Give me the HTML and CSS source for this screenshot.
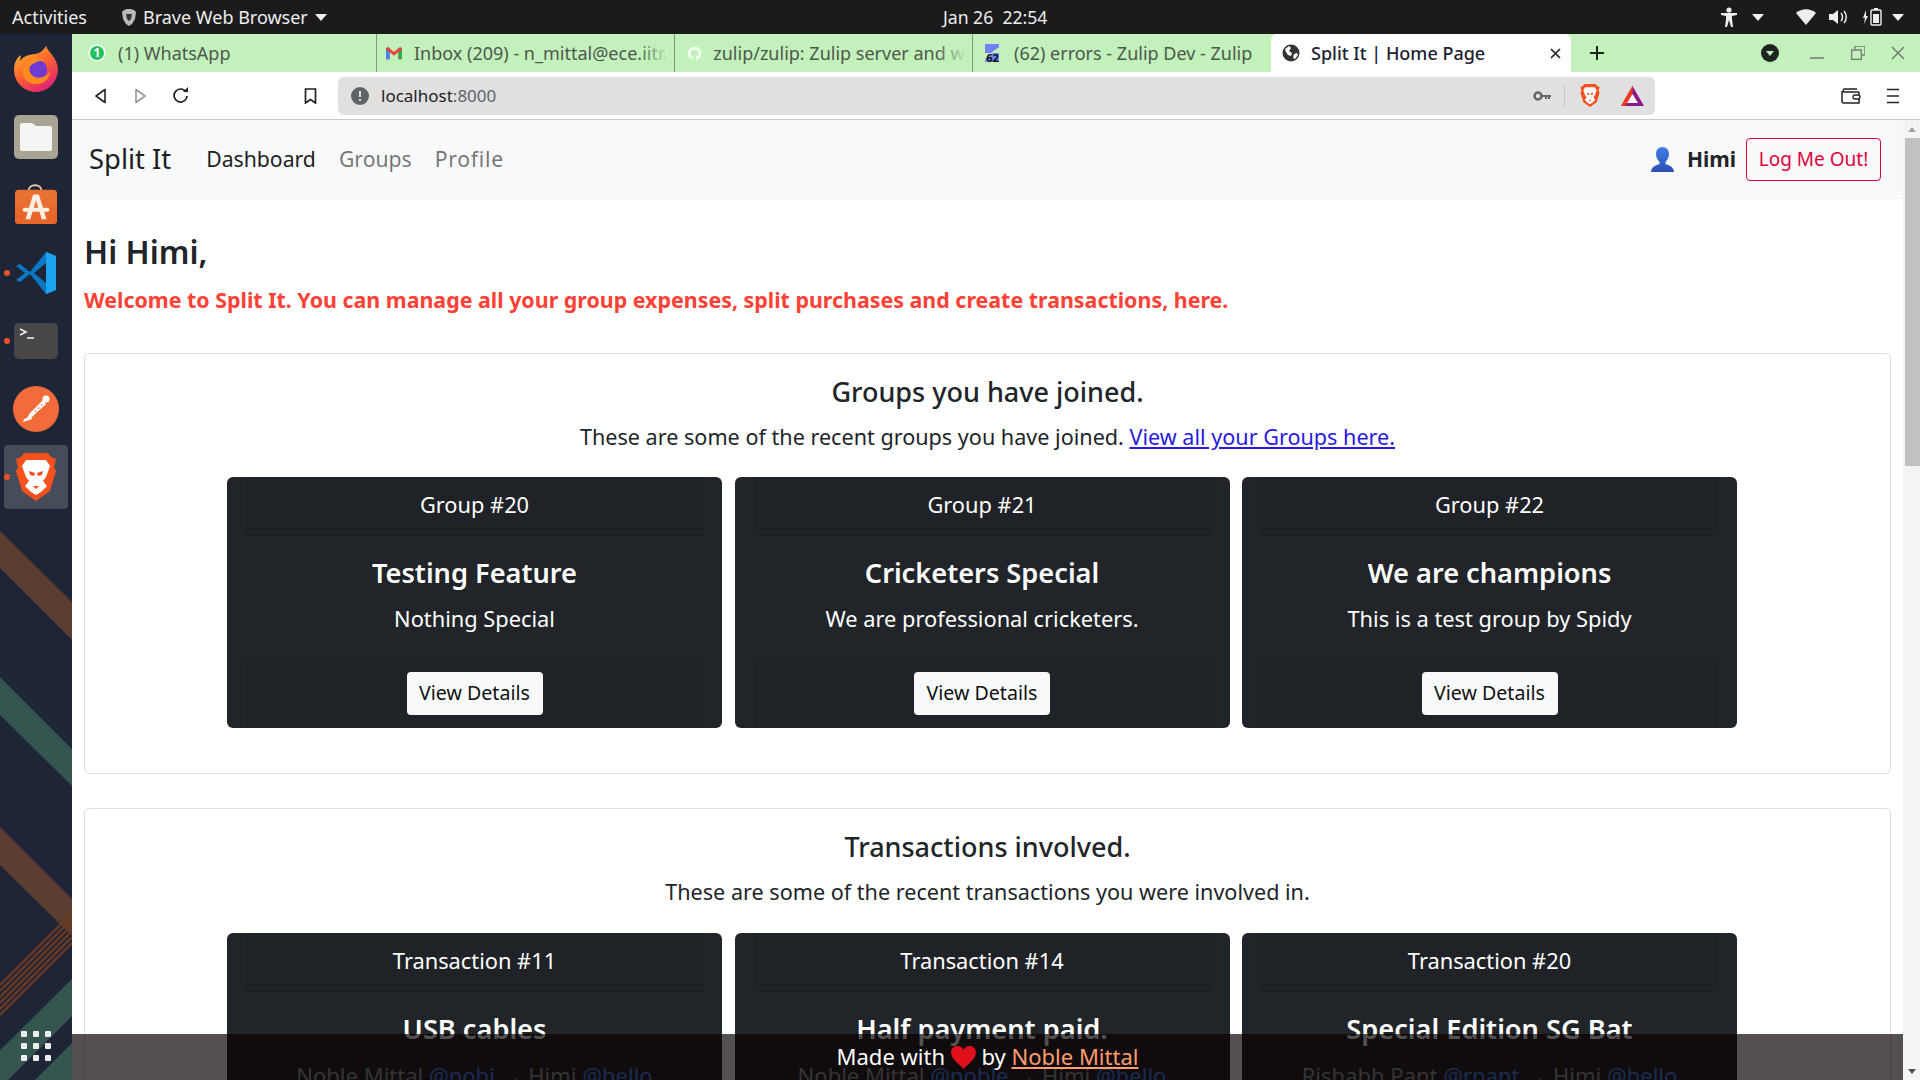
FILE: index.html
```html
<!DOCTYPE html>
<html lang="en">
<head>
    <meta charset="UTF-8">
    <title>Split It | Home Page</title>
    <link rel="stylesheet" href="styles.css">
</head>
<body>
<div class="topbar">
    <div class="top-left">
        <span class="activities">Activities</span>
        <svg class="shield" width="14" height="17" viewBox="0 0 14 17"><path d="M2 1l3-1h4l3 1 2 2-1 7-3 5-3 2-3-2-3-5L0 3z" fill="#b9b9b9"/><path d="M4 5h6l-1 5-2 2-2-2z" fill="#333"/></svg>
        <span>Brave Web Browser</span>
        <i class="caret"></i>
    </div>
    <div class="clock">Jan 26&nbsp; 22:54</div>
    <div class="top-right">
        <svg class="tray-a11y" width="16" height="20" viewBox="0 0 16 20"><circle cx="8" cy="3" r="2.6" fill="#eee"/><path d="M0 6h16v2l-5 1v3l1 8h-2l-2-7-2 7H4l1-8V9L0 8z" fill="#eee"/></svg>
        <i class="caret tray-caret"></i>
        <svg class="tray-wifi" width="20" height="16" viewBox="0 0 20 16"><path d="M10 16L0 4c6-5 14-5 20 0z" fill="#eee"/></svg>
        <svg class="tray-vol" width="19" height="16" viewBox="0 0 19 16"><path d="M0 5h4l5-4v14l-5-4H0z" fill="#eee"/><path d="M12 4c2 2 2 6 0 8M15 2c3 3 3 9 0 12" fill="none" stroke="#eee" stroke-width="1.5"/></svg>
        <svg class="tray-bat" width="19" height="18" viewBox="0 0 19 18"><path d="M3 2L0 10h2l-1 6 4-8H3z" fill="#eee"/><rect x="8" y="2" width="10" height="15" rx="1" fill="none" stroke="#eee" stroke-width="1.4"/><rect x="11" y="0" width="4" height="2" fill="#eee"/><rect x="10" y="6" width="6" height="9" fill="#eee"/></svg>
        <i class="caret"></i>
    </div>
</div>

<div class="desktop">
    <aside class="dock">
        <svg class="dock-art" width="72" height="1046" viewBox="0 34 72 1046">
            <path d="M0 531L72 602V640L0 568zM0 827L72 899V936L0 865z" fill="#5a3d2e"/>
            <path d="M0 677L72 749V786L0 715zM72 979V1016L8 1080H-30zM72 1043V1080H35z" fill="#35554f"/>
            <g stroke="#6b3a22" stroke-width="2.4"><path d="M72 913L0 985M72 919L0 991M72 925L0 997M72 931L0 1003M72 937L0 1009M72 943L0 1015"/></g>
        </svg>
        <div class="dock-item">
            <svg width="46" height="46" viewBox="0 0 46 46"><defs><linearGradient id="ff1" x1="0" y1="0" x2="0.6" y2="1"><stop offset="0" stop-color="#ffcc33"/><stop offset=".5" stop-color="#ff6b2c"/><stop offset="1" stop-color="#e3246e"/></linearGradient></defs><path d="M33 0c2 6 11 11 12 23 0 13-10 23-22 23S1 36 1 24c0-6 2-12 7-15l-1 6c2-3 5-5 9-6 5-1 11-1 14-5z" fill="url(#ff1)"/><circle cx="23" cy="24" r="11" fill="#6d3bd1"/><path d="M13 17c5-6 14-6 19-1-4-2-8-1-10 1-4 1-7 4-5 9 2 5 8 7 13 5 4-1 6-4 7-6 0 8-7 14-15 13C10 37 6 26 13 17z" fill="#ff8a1f"/></svg>
        </div>
        <div class="dock-item">
            <div class="tile tile-files"><svg width="32" height="28" viewBox="0 0 32 28"><path d="M2 0h10l4 3h14a2 2 0 0 1 2 2v21a2 2 0 0 1-2 2H2a2 2 0 0 1-2-2V2a2 2 0 0 1 2-2z" fill="#f6f5f3"/></svg></div>
        </div>
        <div class="dock-item">
            <svg width="44" height="42" viewBox="0 0 46 44"><path d="M15 8c0-9 14-9 14 0" fill="none" stroke="#e8c9a8" stroke-width="2"/><rect x="1" y="6" width="44" height="36" rx="4" fill="#ea6f33"/><path d="M1 24h44v14a4 4 0 0 1-4 4H5a4 4 0 0 1-4-4z" fill="#e8662a"/><path d="M20 11h6l8 26h-5l-6-20-6 20h-5z" fill="#fbeee3"/><rect x="9" y="25" width="28" height="4" rx="2" fill="#fbeee3"/></svg>
        </div>
        <div class="dock-item">
            <i class="run-dot"></i>
            <svg width="42" height="42" viewBox="0 0 42 42"><path d="M1 14l4-2 10 8L31 0l10 4v34l-10 4-16-20L5 30l-4-2 9-7z" fill="#0a78c2"/><path d="M31 0l10 4v34l-10 4z" fill="#1ea3f0"/><path d="M31 11L19 21l12 10z" fill="#1d2537"/></svg>
        </div>
        <div class="dock-item">
            <i class="run-dot"></i>
            <div class="tile tile-term"><svg width="44" height="36" viewBox="0 0 44 36"><path d="M6 6l6 3-6 3" fill="none" stroke="#eee" stroke-width="1.6"/><path d="M13 15h7" stroke="#eee" stroke-width="1.6"/></svg></div>
        </div>
        <div class="dock-item">
            <svg width="46" height="46" viewBox="0 0 46 46"><circle cx="23" cy="23" r="23" fill="#f26b3a"/><circle cx="33" cy="13" r="3.5" fill="#fff"/><path d="M30 14l3 4-14 13-2-4zM18 28l1 5-9 3 1-3 3-1 3-5z" fill="#fff"/><path d="M22 24l1 2M25 21l1 2M28 18l1 2" stroke="#f26b3a" stroke-width="1"/></svg>
        </div>
        <div class="dock-item">
            <i class="run-dot"></i>
            <div class="tile-active"><svg width="40" height="48" viewBox="0 0 40 48"><path d="M8 0h24l3 4 5 2-2 8 2 4-6 20-14 10L6 38 0 18l2-4-2-8 5-2z" fill="#f4511e"/><path d="M10 7h20l4 6-4 11-3 4 4 5-6 6-5 3-5-3-6-6 4-5-3-4-4-11z" fill="#fff"/><path d="M13 18l6 2-1 3-4-1zM27 18l-6 2 1 3 4-1zM17 33h6l-3 3z" fill="#f4511e"/></svg></div>
        </div>
        <div class="app-grid">
            <i></i><i></i><i></i><i></i><i></i><i></i><i></i><i></i><i></i>
        </div>
    </aside>

    <div class="browser">
        <div class="tabstrip">
            <div class="tab">
                <svg width="18" height="18" viewBox="0 0 18 18"><circle cx="9" cy="9" r="8.5" fill="#fff"/><circle cx="9" cy="9" r="7" fill="#25c15f"/><text x="9" y="13" class="fav-num">1</text></svg>
                <span>(1) WhatsApp</span>
            </div>
            <div class="tab tab-fade">
                <svg width="18" height="14" viewBox="0 0 18 14"><path d="M0 2v12h4V6l5 4 5-4v8h4V2l-2-2-7 6-7-6z" fill="#ea4335"/><path d="M0 14h4V6L0 3z" fill="#4285f4"/><path d="M14 14h4V3l-4 3z" fill="#34a853"/></svg>
                <span>Inbox (209) - n_mittal@ece.iitr.ac.in</span>
            </div>
            <div class="tab tab-fade tab-git">
                <svg width="19" height="19" viewBox="0 0 16 16"><path d="M8 0C3.58 0 0 3.58 0 8c0 3.54 2.29 6.53 5.47 7.59.4.07.55-.17.55-.38 0-.19-.01-.82-.01-1.49-2.01.37-2.53-.49-2.69-.94-.09-.23-.48-.94-.82-1.13-.28-.15-.68-.52-.01-.53.63-.01 1.08.58 1.23.82.72 1.21 1.87.87 2.33.66.07-.52.28-.87.51-1.07-1.78-.2-3.64-.89-3.64-3.95 0-.87.31-1.59.82-2.15-.08-.2-.36-1.02.08-2.12 0 0 .67-.21 2.2.82.64-.18 1.32-.27 2-.27.68 0 1.36.09 2 .27 1.53-1.04 2.2-.82 2.2-.82.44 1.1.16 1.92.08 2.12.51.56.82 1.27.82 2.15 0 3.07-1.87 3.75-3.65 3.95.29.25.54.73.54 1.48 0 1.07-.01 1.93-.01 2.2 0 .21.15.46.55.38A8.013 8.013 0 0016 8c0-4.42-3.58-8-8-8z" fill="#fff"/></svg>
                <span>zulip/zulip: Zulip server and web application</span>
            </div>
            <div class="tab">
                <svg width="20" height="20" viewBox="0 0 20 20"><path d="M3 1h14v3l-8 6h8v9H3v-3l8-6H3z" fill="#6f83f5"/><text x="10.500" y="18.500" class="fav-badge">62</text></svg>
                <span>(62) errors - Zulip Dev - Zulip</span>
            </div>
            <div class="tab tab-active">
                <svg class="globe" width="18" height="18" viewBox="0 0 18 18"><circle cx="9" cy="9" r="8.500" fill="#333"/><path d="M3 5l4-3 2 2-2 3 3 2-1 3-3-1-2-3zM12 10l3-1 1 2-3 4-2-1z" fill="#fff"/></svg>
                <span>Split It | Home Page</span>
                <svg class="tab-close" width="11" height="11" viewBox="0 0 11 11"><path d="M1 1l9 9M10 1l-9 9" stroke="#222" stroke-width="1.700"/></svg>
            </div>
            <svg class="new-tab" width="16" height="16" viewBox="0 0 16 16"><path d="M8 1v14M1 8h14" stroke="#222" stroke-width="2"/></svg>
            <div class="win-controls">
                <svg class="tab-search" width="18" height="18" viewBox="0 0 18 18"><circle cx="9" cy="9" r="9" fill="#1f2422"/><path d="M5 7h8l-4 5z" fill="#c2f1bc"/></svg>
                <svg class="win-min" width="14" height="14" viewBox="0 0 14 14"><path d="M0 12h14" stroke="#777" stroke-width="1.500"/></svg>
                <svg class="win-max" width="14" height="14" viewBox="0 0 14 14"><path d="M4 3V0h10v9h-3M.7 4h9.600v9.300H.7z" fill="none" stroke="#777" stroke-width="1.300"/></svg>
                <svg class="win-close" width="14" height="14" viewBox="0 0 14 14"><path d="M1 1l12 12M13 1L1 13" stroke="#777" stroke-width="1.500"/></svg>
            </div>
        </div>

        <div class="toolbar">
            <svg class="nav-back" width="13" height="16" viewBox="0 0 13 16"><path d="M11 1.500v13L2 8z" fill="none" stroke="#222" stroke-width="1.600" stroke-linejoin="round"/></svg>
            <svg class="nav-fwd" width="13" height="16" viewBox="0 0 13 16"><path d="M2 1.500v13L11 8z" fill="none" stroke="#999" stroke-width="1.600" stroke-linejoin="round"/></svg>
            <svg class="nav-reload" width="17" height="17" viewBox="0 0 17 17"><path d="M14 5a6.500 6.500 0 1 0 1 4" fill="none" stroke="#222" stroke-width="1.700"/><path d="M11 5h5V0z" fill="#222"/></svg>
            <svg class="nav-mark" width="13" height="16" viewBox="0 0 13 16"><path d="M1.500 1h10v14l-5-3.500-5 3.500z" fill="none" stroke="#222" stroke-width="1.700"/></svg>
            <div class="urlbar">
                <svg class="url-info" width="18" height="18" viewBox="0 0 18 18"><circle cx="9" cy="9" r="9" fill="#5f6368"/><path d="M8 4h2v6H8zM8 12h2v2H8z" fill="#e0e0e0"/></svg>
                <span class="url-text">localhost<span class="url-port">:8000</span></span>
                <svg class="url-key" width="18" height="10" viewBox="0 0 18 10"><circle cx="5" cy="5" r="3.500" fill="none" stroke="#666" stroke-width="2.500"/><path d="M8 4h10v2h-1v2h-2V6h-1v2h-2V6H8z" fill="#666"/></svg>
                <i class="url-sep"></i>
                <svg class="url-brave" width="20" height="23" viewBox="0 0 40 48"><path d="M8 0h24l3 4 5 2-2 8 2 4-6 20-14 10L6 38 0 18l2-4-2-8 5-2z" fill="#f4511e"/><path d="M10 7h20l4 6-4 11-3 4 4 5-6 6-5 3-5-3-6-6 4-5-3-4-4-11z" fill="#fff"/><path d="M13 18l6 2-1 3-4-1zM27 18l-6 2 1 3 4-1zM17 33h6l-3 3z" fill="#f4511e"/></svg>
                <svg class="url-bat" width="23" height="20" viewBox="0 0 23 20"><path d="M11.500 0L23 20H0z" fill="#8a1a8a"/><path d="M11.500 0L0 20h4L11.500 7z" fill="#f73c14"/><path d="M11.500 8L17 17H6z" fill="#fff"/></svg>
            </div>
            <svg class="tool-wallet" width="20" height="16" viewBox="0 0 20 16"><path d="M18 4H3a2 2 0 0 1 0-3h13M1 3v10a2 2 0 0 0 2 2h15V4" fill="none" stroke="#222" stroke-width="1.500"/><rect x="12" y="7" width="7" height="4" rx="2" fill="#fff" stroke="#222" stroke-width="1.300"/></svg>
            <svg class="tool-menu" width="12" height="16" viewBox="0 0 12 16"><path d="M0 1.500h12M0 8h12M0 14.500h12" stroke="#222" stroke-width="1.500"/></svg>
        </div>

        <div class="viewport">
            <main class="page">
                <nav class="navbar">
                    <a class="brand">Split It</a>
                    <a class="nav-link nav-current">Dashboard</a>
                    <a class="nav-link">Groups</a>
                    <a class="nav-link nav-profile">Profile</a>
                    <svg class="user-icon" width="23" height="25" viewBox="0 0 23 25"><defs><linearGradient id="usr" x1="0" y1="0" x2="0" y2="1"><stop offset="0" stop-color="#3f7fe6"/><stop offset="1" stop-color="#2b4fb5"/></linearGradient></defs><path d="M11.500 0c4 0 6.500 3 6.500 7s-2 6-3.500 8v2c3 1 8 2.500 8.500 8H0c.5-5.500 5.500-7 8.500-8v-2C7 13 5 11 5 7s2.500-7 6.500-7z" fill="url(#usr)"/></svg>
                    <span class="user-name">Himi</span>
                    <a class="btn-logout">Log Me Out!</a>
                </nav>

                <div class="content">
                    <h2 class="hello">Hi Himi,</h2>
                    <p class="welcome">Welcome to Split It. You can manage all your group expenses, split purchases and create transactions, here.</p>

                    <section class="panel">
                        <h3 class="panel-title">Groups you have joined.</h3>
                        <p class="panel-sub">These are some of the recent groups you have joined. <a class="link">View all your Groups here.</a></p>
                        <div class="card-row">
                            <div class="card">
                                <div class="card-head">Group #20</div>
                                <div class="card-body"><h4>Testing Feature</h4><p>Nothing Special</p></div>
                                <div class="card-foot"><a class="btn-light">View Details</a></div>
                            </div>
                            <div class="card">
                                <div class="card-head">Group #21</div>
                                <div class="card-body"><h4>Cricketers Special</h4><p>We are professional cricketers.</p></div>
                                <div class="card-foot"><a class="btn-light">View Details</a></div>
                            </div>
                            <div class="card">
                                <div class="card-head">Group #22</div>
                                <div class="card-body"><h4>We are champions</h4><p>This is a test group by Spidy</p></div>
                                <div class="card-foot"><a class="btn-light">View Details</a></div>
                            </div>
                        </div>
                    </section>

                    <section class="panel">
                        <h3 class="panel-title">Transactions involved.</h3>
                        <p class="panel-sub">These are some of the recent transactions you were involved in.</p>
                        <div class="card-row">
                            <div class="card">
                                <div class="card-head">Transaction #11</div>
                                <div class="card-body"><h4>USB cables</h4><p class="muted">Noble Mittal <a class="handle">@nobi</a> → Himi <a class="handle">@hello</a></p></div>
                            </div>
                            <div class="card">
                                <div class="card-head">Transaction #14</div>
                                <div class="card-body"><h4>Half payment paid.</h4><p class="muted">Noble Mittal <a class="handle">@noble</a> → Himi <a class="handle">@hello</a></p></div>
                            </div>
                            <div class="card">
                                <div class="card-head">Transaction #20</div>
                                <div class="card-body"><h4>Special Edition SG Bat</h4><p class="muted">Rishabh Pant <a class="handle">@rpant</a> → Himi <a class="handle">@hello</a></p></div>
                            </div>
                        </div>
                    </section>
                </div>

                <footer class="made-with">
                    Made with
                    <svg class="heart" width="25" height="23" viewBox="0 0 25 23"><path d="M12.500 23C8 18 0 13 0 6.500 0 2.500 3 0 6.500 0c2.500 0 5 1.500 6 4 1-2.500 3.500-4 6-4C22 0 25 2.500 25 6.500 25 13 17 18 12.500 23z" fill="#e0101a"/></svg>
                    by <a class="made-link">Noble Mittal</a>
                </footer>
            </main>
            <div class="scrollbar">
                <i class="scroll-up"></i>
                <div class="scroll-thumb"></div>
                <i class="scroll-down"></i>
            </div>
        </div>
    </div>
</div>
</body>
</html>
```

FILE: styles.css
```css
* { box-sizing: border-box; }
html, body {
  margin: 0;
  height: 1080px;
  overflow: hidden;
  font-family: "Noto Sans", Arial, sans-serif;
  color: #212529;
}
h2, h3, h4, p { margin: 0; }

/* gnome bar */
.topbar {
  height: 34px;
  background: #1b1b1b;
  color: #eee;
  font-size: 18px;
  display: grid;
  grid-template-columns: 943px auto 1fr;
  align-items: center;
}
.top-left, .top-right { display: flex; align-items: center; }
.activities { margin: 0 35px 0 12px; }
.shield { margin-right: 7px; }
.caret {
  width: 0; height: 0;
  border: 6px solid transparent;
  border-top: 7px solid #eee;
  border-bottom: 0;
}
.top-left .caret { margin-left: 7px; }
.clock { font-size: 17.600px; }
.top-right { margin-left: auto; padding-right: 16px; }
.tray-caret { margin: 0 32px 0 15px; }
.tray-vol { margin: 0 15px 0 13px; }
.tray-bat { margin-right: 10px; }

.desktop { display: flex; height: 1046px; }

/* dock */
.dock {
  width: 72px;
  background: #1d2537;
  position: relative;
  display: flex;
  flex-direction: column;
  padding-top: 1px;
  overflow: hidden;
}
.dock-art { position: absolute; left: 0; top: 0; }
.dock-item {
  height: 68px;
  display: flex;
  align-items: center;
  justify-content: center;
  position: relative;
}
.run-dot {
  position: absolute;
  left: 4px; top: 31px;
  width: 6px; height: 6px;
  border-radius: 50%;
  background: #e95420;
}
.tile {
  width: 44px;
  border-radius: 5px;
  display: flex;
  align-items: center;
  justify-content: center;
}
.tile-files { height: 44px; background: #a9a493; }
.tile-term { height: 36px; background: #474747; align-items: flex-start; }
.tile-active {
  width: 64px; height: 64px;
  background: #474c5b;
  border-radius: 4px;
  display: flex;
  align-items: center;
  justify-content: center;
}
.app-grid {
  position: relative;
  margin: auto auto 19px;
  display: grid;
  grid-template-columns: repeat(3, 6px);
  gap: 6px;
}
.app-grid i { height: 6px; background: #eee; border-radius: 1px; }

/* browser chrome */
.browser { flex: 1; display: flex; flex-direction: column; min-width: 0; }
.tabstrip {
  height: 38px;
  background: #c2f1bc;
  display: flex;
  align-items: stretch;
  padding-left: 7px;
  font-size: 18px;
  color: #50564f;
}
.tab {
  width: 298px;
  display: flex;
  align-items: center;
  gap: 12px;
  padding-left: 9px;
  border-right: 1px solid #7f9a7c;
  white-space: nowrap;
  overflow: hidden;
  position: relative;
}
.tab:nth-child(4) { border-right: 0; }
.tab-fade span { overflow: hidden; }
.tab-git { padding-left: 13px; }
.tab-fade::after {
  content: "";
  position: absolute;
  right: 0; top: 0; bottom: 0;
  width: 36px;
  background: linear-gradient(90deg, rgba(194,241,188,0), #c2f1bc 85%);
}
.tab-active {
  width: 300px;
  background: #fff;
  color: #1e2233;
  border-right: 0;
  border-radius: 6px 6px 0 0;
  font-weight: 500;
  gap: 11px;
  padding-left: 11px;
}
.tab-close { margin-left: auto; margin-right: 10px; }
.new-tab { align-self: center; margin-left: 18px; }
.fav-num { font-size: 12px; font-weight: 700; fill: #fff; text-anchor: middle; }
.fav-badge { font-size: 11px; font-weight: 700; fill: #111; text-anchor: middle; }
.win-controls {
  margin-left: auto;
  display: flex;
  align-items: center;
  padding-right: 15px;
}
.win-min { margin-left: 31.500px; }
.win-max { margin-left: 27px; }
.win-close { margin-left: 26px; }

.toolbar {
  height: 48px;
  background: #fff;
  border-bottom: 1px solid #c8c8c8;
  display: flex;
  align-items: center;
  font-size: 17px;
}
.nav-back { margin-left: 22px; }
.nav-fwd { margin-left: 27px; }
.nav-reload { margin-left: 25px; }
.nav-mark { margin-left: 115px; }
.urlbar {
  width: 1317px;
  height: 38px;
  margin-left: 21px;
  background: #e0e0e0;
  border-radius: 6px;
  display: flex;
  align-items: center;
  padding-left: 13px;
  color: #222;
}
.url-text { margin-left: 12px; }
.url-port { color: #5f6368; }
.url-key { margin-left: auto; }
.url-sep { width: 1px; height: 20px; background: #c4c4c4; margin: 0 15px 0 13px; }
.url-bat { margin: 0 11px 0 21px; }
.tool-wallet { margin-left: 186px; }
.tool-menu { margin-left: 26px; }

/* page */
.viewport { flex: 1; display: flex; min-height: 0; }
.page { flex: 1; position: relative; overflow: hidden; background: #fff; min-width: 0; }
.navbar {
  height: 79px;
  background: #f8f9fa;
  display: flex;
  align-items: center;
  padding: 0 22px 0 17px;
  font-size: 21.200px;
}
.brand { font-size: 27.400px; color: #1b1f23; margin: 0 35px 2px 0; }
.nav-link { color: rgba(0,0,0,.55); margin: 0 23px 2px 0; }
.nav-current { color: rgba(0,0,0,.9); }
.nav-profile { letter-spacing: .7px; }
.user-icon { margin-left: auto; margin-right: 13px; }
.user-name { font-weight: 700; font-size: 21px; margin: 0 10px 2px 0; }
.btn-logout {
  width: 135px;
  height: 43px;
  border: 1px solid #e0003c;
  border-radius: 4px;
  color: #e0003c;
  font-size: 19px;
  padding-bottom: 2px;
  display: flex;
  align-items: center;
  justify-content: center;
}
.content { padding: 34px 12px 0; }
.hello { font-size: 32px; line-height: 38px; font-weight: 600; }
.welcome {
  font-size: 21.400px;
  line-height: 30px;
  margin-top: 14px;
  font-weight: 700;
  color: #ff4136;
}
.panel {
  margin-top: 38px;
  border: 1px solid #dfdfdf;
  border-radius: 5px;
  padding: 21px 0 45px;
  text-align: center;
}
.panel + .panel { margin-top: 34px; }
.panel + .panel .card-row { margin-top: 26px; }
.panel-title { font-size: 27px; line-height: 34px; font-weight: 500; }
.panel-sub { font-size: 21.600px; line-height: 30px; margin-top: 13px; }
.link { color: #2a1ae0; text-decoration: underline; }
.card-row {
  margin-top: 25px;
  padding-left: 142px;
  display: flex;
  gap: 12.500px;
}
.card {
  width: 495px;
  height: 251px;
  background: #212529;
  color: #fff;
  border-radius: 6px;
  font-size: 21.800px;
}
.card-head {
  height: 59px;
  margin: 0 18px;
  padding-top: 13px;
  line-height: 30px;
  background: rgba(0,0,0,.03);
  border-bottom: 1px solid rgba(0,0,0,.125);
}
.card-body { height: 123px; padding-top: 20px; }
.card-body h4 { font-size: 27.200px; line-height: 34px; font-weight: 600; }
.card-body p { line-height: 30px; margin-top: 14px; }
.card-body .muted { color: #9aa0a6; font-size: 22px; }
.handle { color: #3f8cff; }
.card-foot {
  height: 69px;
  margin: 0 18px;
  padding-top: 12px;
  background: rgba(0,0,0,.03);
  border-top: 1px solid rgba(0,0,0,.125);
}
.btn-light {
  display: inline-block;
  width: 136px;
  height: 43px;
  line-height: 42px;
  background: #f8f9fa;
  color: #111;
  border-radius: 4px;
  font-size: 19.600px;
}
.made-with {
  position: absolute;
  left: 0; right: 0; bottom: 0;
  height: 46px;
  background: rgba(8,2,2,.69);
  color: #fff;
  font-size: 22px;
  line-height: 44px;
  text-align: center;
}
.heart { vertical-align: -4px; }
.made-link { color: #ff9d6e; text-decoration: underline; }

.scrollbar {
  width: 17px;
  background: #f4f4f4;
  display: flex;
  flex-direction: column;
  align-items: flex-end;
  position: relative;
}
.scroll-up, .scroll-down {
  position: absolute;
  right: 4px;
  border: 4px solid transparent;
}
.scroll-up { top: 7px; border-bottom: 5px solid #a3a3a3; border-top: 0; }
.scroll-down { bottom: 6px; border-top: 5px solid #505050; border-bottom: 0; }
.scroll-thumb {
  width: 15px;
  height: 328px;
  margin-top: 18px;
  background: #c1c1c1;
}
```
